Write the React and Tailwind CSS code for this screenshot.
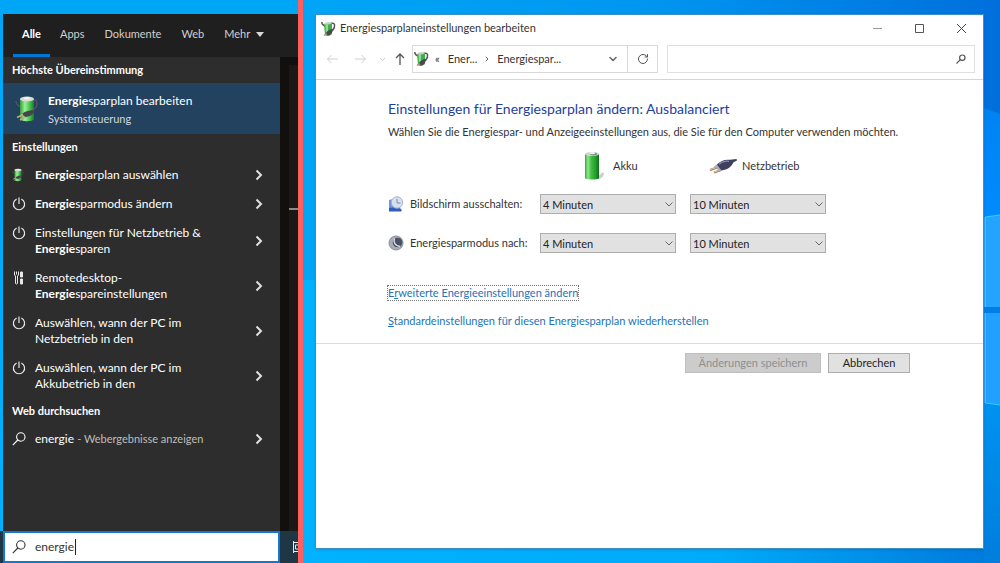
import React, { useState } from "react";
import { ChevronDown, ChevronRight, RotateCw } from "lucide-react";

const TABS = ["Alle", "Apps", "Dokumente", "Web"];

const SETTINGS = [
  { icon: "plan", lines: [["Energie", "sparplan auswählen"]] },
  { icon: "power", lines: [["Energie", "sparmodus ändern"]] },
  {
    icon: "power",
    lines: [
      ["", "Einstellungen für Netzbetrieb &"],
      ["Energie", "sparen"],
    ],
  },
  {
    icon: "tools",
    lines: [
      ["", "Remotedesktop-"],
      ["Energie", "spareinstellungen"],
    ],
  },
  {
    icon: "power",
    lines: [
      ["", "Auswählen, wann der PC im"],
      ["", "Netzbetrieb in den"],
    ],
  },
  {
    icon: "power",
    lines: [
      ["", "Auswählen, wann der PC im"],
      ["", "Akkubetrieb in den"],
    ],
  },
];

const PowerIcon = () => (
  <svg viewBox="0 0 14 14" className="w-3.5 h-3.5" fill="none" stroke="#e6e6e6" strokeWidth="1.2">
    <path d="M4.6 2.1A5.6 5.6 0 1 0 9.4 2.1" />
    <path d="M7 0.5V7" />
  </svg>
);

const ToolsIcon = () => (
  <svg viewBox="0 0 14 14" className="w-3.5 h-3.5" fill="none" stroke="#e6e6e6">
    <path d="M2.5 0.5v3.500l1 1v7.500q1 1 2 0V5l1-1V0.500M4.500 0.500v3" />
    <path d="M9.500 13V8M9.500 6V1M8.500 1v5h2V1zM8.500 8v5h2V8z" />
  </svg>
);

const LoupeIcon = ({ className }) => (
  <svg viewBox="0 0 14 14" className={className} fill="none" stroke="currentColor" strokeWidth="1.1">
    <circle cx="8.8" cy="5" r="4.2" />
    <path d="M5.8 8L0.8 13.2" />
  </svg>
);

// Battery with the power plug lying in front of it
const PlanIcon = ({ className }) => (
  <svg viewBox="0 0 24 26" className={className}>
    <defs>
      <linearGradient id="planGreen" x1="0" x2="1" y1="0" y2="0">
        <stop offset="0" stopColor="#2f9e37" />
        <stop offset="0.35" stopColor="#9df09a" />
        <stop offset="0.7" stopColor="#45c24c" />
        <stop offset="1" stopColor="#1b7a28" />
      </linearGradient>
    </defs>
    <path d="M1 5c0 4 3 5 5 6M19 4c4 0 4 7 0 9" fill="none" stroke="#5b5566" strokeWidth="1.2" />
    <path d="M5 3v20c0 3 14 3 14 0V3z" fill="url(#planGreen)" />
    <ellipse cx="12" cy="3" rx="7" ry="2.4" fill="#d6dbd6" />
    <ellipse cx="12" cy="2.2" rx="3" ry="1.3" fill="#f5f5f5" />
    <path d="M7 18c3-3 8-4 13-4-1 4-5 7-10 7z" fill="#45454e" />
    <path d="M8 18.500l-6 3M10 21l-5 3" stroke="#c4a88a" strokeWidth="1.5" />
  </svg>
);

// Same battery, with the cable curling round it, as the title bar shows it
const PlanCableIcon = () => (
  <svg viewBox="0 0 15 16" className="w-[15px] h-4">
    <path d="M0.800 1c0 3 1.500 3.500 3.500 4M10 2.500c4-1.500 5 3 1.500 7" fill="none" stroke="#55525f" strokeWidth="1.500" />
    <path d="M3 3l8-1.500v11.500q-4 3.500-7 1z" fill="#3fae48" />
    <path d="M4.500 4l2.500-.500v7l-2 1z" fill="#8ee08e" />
    <path d="M3 3.200c1-2 6-3 8-1.500-1 1.800-6 2.500-8 1.500z" fill="#c9cfcb" />
    <path d="M5 12c1-2 4-4 7-4 0 3-2 6-5 6.500z" fill="#4b4851" />
    <path d="M5.500 12.500L3 14.500" stroke="#b9896c" strokeWidth="1.500" />
  </svg>
);

const BatteryIcon = () => (
  <svg viewBox="0 0 24 30" className="w-6 h-[30px]">
    <defs>
      <linearGradient id="batGreen" x1="0" x2="1" y1="0" y2="0">
        <stop offset="0" stopColor="#35a03d" />
        <stop offset="0.2" stopColor="#8fe88c" />
        <stop offset="0.45" stopColor="#3fbd45" />
        <stop offset="0.75" stopColor="#25a02f" />
        <stop offset="1" stopColor="#0f6d1c" />
      </linearGradient>
    </defs>
    <path d="M14 28l8-7c2 2 0 6-4 7z" fill="#cdcdcd" />
    <path d="M4 3v24c0 2 14 2 14 0V3z" fill="url(#batGreen)" />
    <ellipse cx="11" cy="3" rx="7" ry="2" fill="#c4dcc4" />
    <ellipse cx="12.500" cy="3" rx="3.400" ry="1.400" fill="#7f7f92" />
    <ellipse cx="11.500" cy="2.200" rx="2.800" ry="1.100" fill="#f0f0f4" />
  </svg>
);

const PlugIcon = () => (
  <svg viewBox="0 0 30 16" className="w-[30px] h-4">
    <path d="M9 9.500l-7 2.500M13 12l-7 2.600" stroke="#8a6a4c" strokeWidth="2" />
    <path d="M9 9.200l-7 2.500M13 11.700l-7 2.500" stroke="#e2c8a4" strokeWidth="1.200" />
    <path d="M6 8.500L10 5.500l6 5.500-4 2.500z" fill="#aba9b5" />
    <path d="M9 6.500C12.500 2.500 17 1.200 22 1.800l6.500-.800.500 1.600-3.500 1.700c-2 4-5.500 7.700-12 8.200z" fill="#3f4060" />
    <path d="M11 6.300c3-2.700 6.500-3.500 10-3" stroke="#8587a6" strokeWidth="1.300" fill="none" />
  </svg>
);

const DisplayIcon = () => (
  <svg viewBox="0 0 16 16" className="w-4 h-4 shrink-0">
    <path d="M1 4l4-1 8 10v2H1z" fill="#6f96e2" />
    <path d="M1 12l8-1 5 3-1 1.500H1z" fill="#2f5cc0" />
    <circle cx="9" cy="6.500" r="5.700" fill="#d6e0ee" stroke="#a3b0c6" strokeWidth="1" />
    <path d="M9 3v4h3.500" stroke="#7d8ba5" fill="none" />
  </svg>
);

const MoonIcon = () => (
  <svg viewBox="0 0 16 16" className="w-4 h-4 shrink-0">
    <circle cx="8" cy="8" r="7" fill="#a9abb8" stroke="#8b8d9a" strokeWidth="1" />
    <circle cx="9.500" cy="7.500" r="4.800" fill="#4a4e66" />
    <path d="M6.500 3.500C5 7 7 11 12 11.500" stroke="#d8d9e2" strokeWidth="1.500" fill="none" />
  </svg>
);

const ICONS = {
  plan: <PlanIcon className="w-3 h-3.5" />,
  power: <PowerIcon />,
  tools: <ToolsIcon />,
};

const ResultRow = ({ icon, children }) => (
  <button className="flex w-full items-center pt-[7px] pb-[6px] pl-[9px] pr-[17px] text-left text-[12px] leading-4 text-white hover:bg-[#3d3d3d]">
    <span className="flex h-4 w-[23px] shrink-0 items-center self-start">{icon}</span>
    <span className="flex-1">{children}</span>
    <svg viewBox="0 0 8 12" className="w-2 h-3" fill="none" stroke="#e0e0e0" strokeWidth="2">
      <path d="M1.500 1.500L6 6l-4.500 4.500" />
    </svg>
  </button>
);

const SearchPanel = () => {
  const [query, setQuery] = useState("energie");

  return (
    <section className="flex w-[298px] shrink-0 flex-col bg-linear-to-b from-[#00a6f6] to-[#00b2ff] pt-3.5">
      <div className="ml-[3px] flex flex-1 flex-col">
        <nav className="flex h-[43px] items-stretch bg-[#1f1f1f] pl-2.5 text-[11px] text-[#d0d0d0]">
          {TABS.map((tab, i) => (
            <button
              key={tab}
              className={
                i === 0
                  ? "border-b-[3px] border-[#0078d7] px-[9px] font-bold text-white"
                  : "border-b-[3px] border-transparent px-[10px]"
              }
            >
              {tab}
            </button>
          ))}
          <button className="flex items-center gap-1.5 border-b-[3px] border-transparent px-[10px]">
            Mehr
            <svg viewBox="0 0 8 5" className="w-2 h-[5px]" fill="#d8d8d8">
              <path d="M0 0h8L4 5z" />
            </svg>
          </button>
        </nav>

        <div className="flex flex-1">
          <div className="flex-1 bg-[#2d2d2d] text-white">
            <h2 className="flex h-[26px] items-center pl-[9px] text-[11px] font-bold">
              Höchste Übereinstimmung
            </h2>
            <button className="flex h-[51px] w-full items-center bg-[#22425f] pl-3 text-left">
              <PlanIcon className="w-6 h-[26px]" />
              <span className="ml-[9px]">
                <span className="block text-[12px] leading-5">
                  <b className="font-bold">Energie</b>sparplan bearbeiten
                </span>
                <span className="block text-[11px] leading-4 text-[#d0d6dc]">
                  Systemsteuerung
                </span>
              </span>
            </button>

            <h2 className="flex h-[26px] items-center pl-[9px] text-[11px] font-bold">
              Einstellungen
            </h2>
            {SETTINGS.map((item, i) => (
              <ResultRow key={i} icon={ICONS[item.icon]}>
                {item.lines.map(([match, rest]) => (
                  <span key={rest} className="block whitespace-nowrap">
                    <b className="font-bold">{match}</b>
                    {rest}
                  </span>
                ))}
              </ResultRow>
            ))}

            <h2 className="flex h-[26px] items-center pl-[9px] text-[11px] font-bold">
              Web durchsuchen
            </h2>
            <ResultRow icon={<LoupeIcon className="w-3.5 h-3.5" />}>
              energie <span className="text-[11px] text-[#bdbdbd]">- Webergebnisse anzeigen</span>
            </ResultRow>
          </div>
          <div className="flex w-[18px] bg-[#12100e] pl-[9px] pt-2">
            <div className="flex-1 bg-[#1b1816] pt-[143px]">
              <div className="h-0.5 bg-[#8a8a8a]" />
            </div>
          </div>
        </div>
      </div>

      <div className="flex h-8 bg-[#1f3644] pl-[3px]">
        <label className="flex flex-1 items-center border-2 border-[#1177cf] bg-white pl-[7px] text-[#333]">
          <LoupeIcon className="w-3.5 h-3.5" />
          <input
            aria-label="Suche"
            value={query}
            size={4}
            onChange={(e) => setQuery(e.target.value)}
            className="ml-[9px] w-[41px] border-r border-[#222] text-[12px] leading-4 outline-none"
          />
        </label>
        <div className="flex w-[18px] items-center justify-end">
          <svg viewBox="0 0 6 14" className="w-1.5 h-3.5" fill="none" stroke="#e8e8e8">
            <path d="M1.500 1V13M1.500 2.500H6M1.500 11.500H6M3.500 5V9M3.500 5H6M3.500 9H6" />
          </svg>
        </div>
      </div>
    </section>
  );
};

const TimeSelect = ({ id, label, value }) => (
  <div className="relative">
    <select
      id={id}
      aria-label={label}
      defaultValue={value}
      className="block h-5 w-full appearance-none border border-[#adadad] bg-[#e1e1e1] pl-0.5 text-[11px] leading-none text-[#222]"
    >
      <option>{value}</option>
      <option>Niemals</option>
    </select>
    <svg
      viewBox="0 0 8 5"
      className="pointer-events-none absolute right-[3px] top-2 w-2 h-[5px]"
      fill="none"
      stroke="#666"
    >
      <path d="M0.500 0.500L4 4l3.500-3.500" />
    </svg>
  </div>
);

const Wallpaper = () => (
  <svg
    className="absolute inset-0 h-full w-full"
    viewBox="0 0 697 563"
    preserveAspectRatio="none"
  >
    <defs>
      <linearGradient id="sky" x1="0" x2="1" y1="0" y2="0">
        <stop offset="0" stopColor="#00a6f6" />
        <stop offset="0.5" stopColor="#0096f0" />
        <stop offset="1" stopColor="#006fdc" />
      </linearGradient>
      <linearGradient id="floor" x1="0" x2="1" y1="0" y2="0">
        <stop offset="0" stopColor="#00b2ff" />
        <stop offset="0.6" stopColor="#00aaf8" />
        <stop offset="1" stopColor="#0078dc" />
      </linearGradient>
      <linearGradient id="beam" x1="0" x2="0" y1="0" y2="1">
        <stop offset="0" stopColor="#0082f2" />
        <stop offset="1" stopColor="#008cff" />
      </linearGradient>
      <linearGradient id="glow" x1="0" x2="0" y1="0" y2="1">
        <stop offset="0" stopColor="#0092f0" />
        <stop offset="1" stopColor="#007edc" />
      </linearGradient>
    </defs>
    <path d="M0 0H697V280H0z" fill="url(#sky)" />
    <path d="M0 280H697V563H0z" fill="url(#floor)" />
    <path d="M660 100l37 14V230h-37z" fill="url(#beam)" />
    <path d="M681 217l16-2V307h-16z" fill="#22a4ff" />
    <path d="M681 307h16v6h-16z" fill="#007ee6" />
    <path d="M681 313h16v92l-16-2z" fill="#22a0ff" />
    <path d="M681 403l16 2V563h-16z" fill="url(#glow)" />
    <path d="M697 215L682.500 217V307M682.500 313V403L697 405" fill="none" stroke="#2fd0ff" />
  </svg>
);

const PowerWindow = () => (
  <main className="relative min-w-0 flex-1 pl-3 pr-4 py-3.5">
    <Wallpaper />
    <div className="relative flex h-full flex-col border border-[#3c8fc4] bg-white text-[11px] text-[#333] shadow-sm">
      <header className="flex h-[27px] items-center pl-[5px]">
        <PlanCableIcon />
        <h1 className="ml-1 flex-1">Energiesparplaneinstellungen bearbeiten</h1>
        <div className="flex h-full text-[#444]">
          <button aria-label="Minimieren" className="flex w-[42px] items-center justify-center">
            <svg viewBox="0 0 9 9" className="w-[9px] h-[9px]" stroke="#999">
              <path d="M0 4.500H9" />
            </svg>
          </button>
          <button aria-label="Maximieren" className="flex w-[42px] items-center justify-center">
            <svg viewBox="0 0 9 9" className="w-[9px] h-[9px]" stroke="#555" fill="none">
              <path d="M0.500 0.500h8v8h-8z" />
            </svg>
          </button>
          <button aria-label="Schließen" className="flex w-[43px] items-center justify-center">
            <svg viewBox="0 0 9 9" className="w-[9px] h-[9px]" stroke="#444">
              <path d="M0 0L9 9M9 0L0 9" />
            </svg>
          </button>
        </div>
      </header>

      <div className="flex h-[38px] items-start border-b border-[#d5d5d5] pr-2 pt-[3px]">
        <div className="flex h-7 w-24 shrink-0 items-center pl-[11px] pr-[5px]">
          <svg viewBox="0 0 80 12" className="w-20 h-3" fill="none" stroke="#cfcfcf">
            <path d="M0.500 6H11M4.500 2L0.500 6l4 4" />
            <path d="M28 6h10.500M34.500 2l4 4-4 4" />
            <path d="M53 5l2.500 2.500L58 5" />
            <path d="M73 12V1M69 5l4-4 4 4" stroke="#555" strokeWidth="1.300" />
          </svg>
        </div>
        <div className="flex h-7 flex-[250] border border-[#d9d9d9]">
          <div className="flex flex-1 items-center pl-px">
            <PlanCableIcon />
            <span className="ml-1.5">«</span>
            <span className="ml-2">Ener...</span>
            <ChevronRight className="ml-1.5 w-2 h-2.5" strokeWidth={3} color="#666" />
            <span className="ml-1.5">Energiespar...</span>
            <ChevronDown className="ml-auto mr-2 w-3 h-3" strokeWidth={3} color="#666" />
          </div>
          <button
            aria-label="Aktualisieren"
            className="flex w-[30px] items-center justify-center border-l border-[#d9d9d9]"
          >
            <RotateCw className="w-3 h-3" strokeWidth={2} color="#555" />
          </button>
        </div>
        <label className="ml-[9px] flex h-7 flex-[305] items-center border border-[#e0e0e0] pr-2 text-[#555]">
          <input aria-label="Suchen" className="min-w-0 flex-1 px-2 outline-none" />
          <svg viewBox="0 0 10 10" className="w-2.5 h-2.5" fill="none" stroke="currentColor" strokeWidth="1.2">
            <circle cx="6.300" cy="3.700" r="2.700" />
            <path d="M4.300 5.700L0.500 9.500" />
          </svg>
        </label>
      </div>

      <div className="px-[72px]">
        <h2 className="mt-[19px] text-[14px] leading-5 text-[#1e3f9e]">
          Einstellungen für Energiesparplan ändern: Ausbalanciert
        </h2>
        <p className="mt-[3px] leading-5">
          Wählen Sie die Energiespar- und Anzeigeeinstellungen aus, die Sie für den Computer
          verwenden möchten.
        </p>

        <div className="mt-[7px] grid grid-cols-[138px_136px_136px] items-center gap-x-3.5">
          <span />
          <div className="flex h-[34px] items-center gap-2 pl-[41px]">
            <BatteryIcon />
            Akku
          </div>
          <div className="flex h-[34px] items-center gap-1 pl-[18px]">
            <PlugIcon />
            Netzbetrieb
          </div>

          <label htmlFor="display-dc" className="flex h-[42px] items-center gap-1.5 whitespace-nowrap">
            <DisplayIcon />
            Bildschirm ausschalten:
          </label>
          <TimeSelect id="display-dc" value="4 Minuten" />
          <TimeSelect id="display-ac" label="Bildschirm ausschalten, Netzbetrieb" value="10 Minuten" />

          <label htmlFor="sleep-dc" className="flex h-9 items-center gap-1.5 whitespace-nowrap">
            <MoonIcon />
            Energiesparmodus nach:
          </label>
          <TimeSelect id="sleep-dc" value="4 Minuten" />
          <TimeSelect id="sleep-ac" label="Energiesparmodus nach, Netzbetrieb" value="10 Minuten" />
        </div>

        <div className="mt-[25px] flex flex-col items-start gap-3.5 text-[#2472b8]">
          <a href="#advanced" className="leading-[14px] outline-1 outline-dotted outline-[#777]">
            E<u>r</u>weiterte Energieeinstellungen ändern
          </a>
          <a href="#defaults" className="leading-[14px]">
            <u>S</u>tandardeinstellungen für diesen Energiesparplan wiederherstellen
          </a>
        </div>
      </div>

      <footer className="mt-[15px] flex justify-end gap-[7px] border-t border-[#dcdcdc] px-[73px] pt-[9px]">
        <button
          disabled
          className="h-5 w-[136px] border border-[#bfbfbf] bg-[#cccccc] text-[#8f8f8f]"
        >
          Änderungen speichern
        </button>
        <button className="h-5 w-[82px] border border-[#adadad] bg-[#e1e1e1] text-[#222]">
          Abbrechen
        </button>
      </footer>
    </div>
  </main>
);

export default function App() {
  return (
    <div className="flex min-h-screen font-['Lato','Open_Sans',sans-serif]">
      <SearchPanel />
      <div className="w-[5px] shrink-0 bg-[#ff5f5f]" />
      <PowerWindow />
    </div>
  );
}
